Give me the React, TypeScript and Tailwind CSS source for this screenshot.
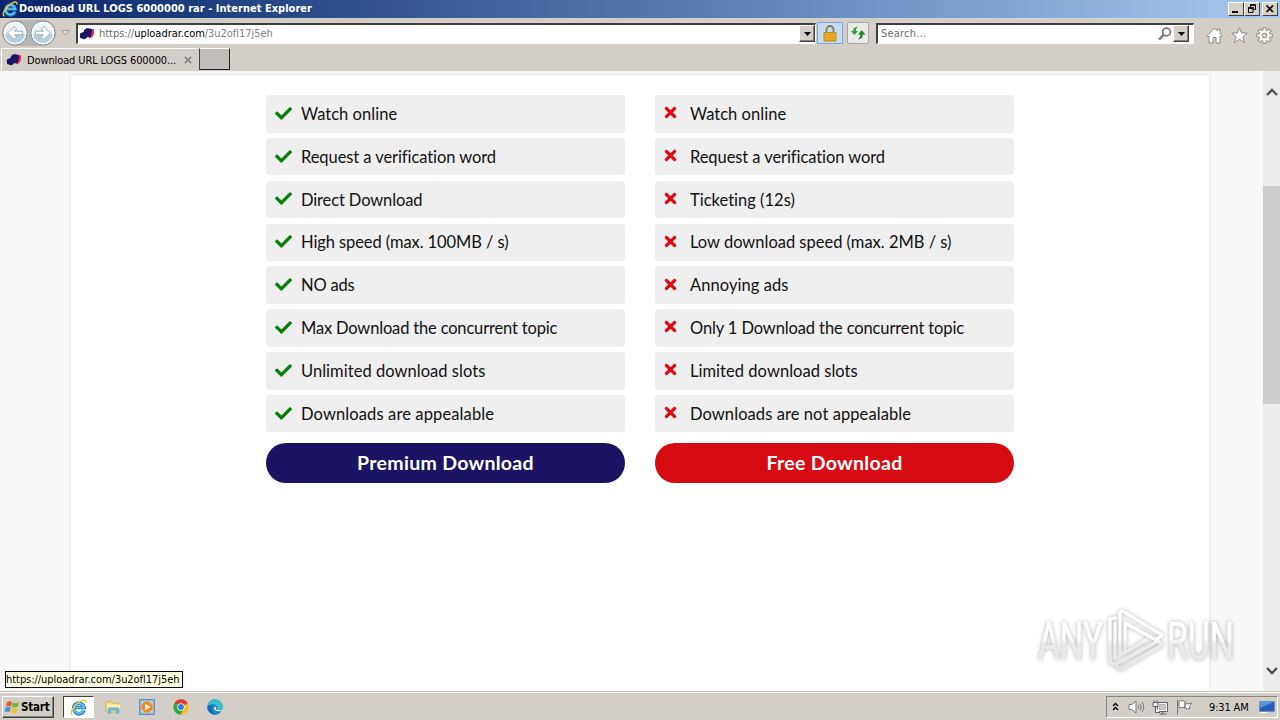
import React from 'react';
import { FaCheck, FaTimes } from 'react-icons/fa';

interface Feature {
  label: string;
  className: string;
}

const premiumFeatures: Feature[] = [
  { label: 'Watch online', className: 'tracking-[0.03px]' },
  { label: 'Request a verification word', className: 'tracking-[-0.08px]' },
  { label: 'Direct Download', className: 'tracking-[-0.13px]' },
  { label: 'High speed (max. 100MB / s)', className: 'tracking-[-0.09px]' },
  { label: 'NO ads', className: 'tracking-[-0.2px]' },
  { label: 'Max Download the concurrent topic', className: 'tracking-[-0.17px]' },
  { label: 'Unlimited download slots', className: 'tracking-[0.04px]' },
  { label: 'Downloads are appealable', className: 'tracking-[0.12px]' },
];

const freeFeatures: Feature[] = [
  { label: 'Watch online', className: 'tracking-[0.03px]' },
  { label: 'Request a verification word', className: 'tracking-[-0.08px]' },
  { label: 'Ticketing (12s)', className: 'tracking-[0.01px]' },
  { label: 'Low download speed (max. 2MB / s)', className: 'tracking-[-0.01px]' },
  { label: 'Annoying ads', className: 'tracking-[0.06px]' },
  { label: 'Only 1 Download the concurrent topic', className: 'tracking-[-0.12px]' },
  { label: 'Limited download slots', className: 'tracking-[0.04px]' },
  { label: 'Downloads are not appealable', className: 'tracking-[0.08px]' },
];

function IeLogo({ className }: { className?: string }) {
  return (
    <svg viewBox="0 0 16 16" className={className}>
      <path d="M13.2 10.6A5 5 0 1 1 13.4 8H4.8" fill="none" stroke="#1f7fd0" strokeWidth="3.4" />
      <path d="M12.9 10.6A4.8 4.8 0 1 1 13.2 8H5" fill="none" stroke="#6cc7f4" strokeWidth="1.6" />
      <path d="M2.6 15C-1.5 14.500 4 5 10.500 1.800C13.500.400 15.600.700 14.800 3.600" fill="none" stroke="#f3c62c" strokeWidth="1.4" />
    </svg>
  );
}

function SiteIcon() {
  return (
    <svg viewBox="0 0 16 14" className="h-[14px] w-4 shrink-0">
      <path d="M11 2.500C13 1 15.500 1.500 15 4C15.500 8 13 12 10 11Z" fill="#e8254e" />
      <path d="M1 9C0 6 3 5.500 4.500 5C5 1.500 8 .500 10 1.500C13 1 13.500 4 12.500 6C13 9 11 11 8.500 10C6 13 3.500 12.500 3.500 11.500C1.500 12 .5 10.500 1 9Z" fill="#1c1466" />
    </svg>
  );
}

/** Round back / forward button */
function NavButton({ forward = false }: { forward?: boolean }) {
  return (
    <svg viewBox="0 0 26 26" className={forward ? 'size-[26px] -scale-x-100' : 'size-[26px]'}>
      <circle cx="13" cy="13" r="12" fill="#eef3f7" stroke="#7f8d98" />
      <path d="M2.500 14A10.500 10.500 0 0 0 23.500 14Z" fill="#b5cfe0" />
      <circle cx="13" cy="13" r="10.700" fill="none" stroke="#fff" strokeWidth="1.2" />
      <path d="M5.500 13L12.200 6.500L14.700 9L12.700 11.200H20.500V14.800H12.700L14.700 17L12.200 19.500Z" fill="#fff" stroke="#8fa5b4" strokeWidth=".9" />
    </svg>
  );
}

function DropButton() {
  return (
    <div className="flex h-[17px] w-4 items-center justify-center border border-t-white border-l-white border-r-[#404040] border-b-[#404040] bg-[#d4d0c8] shadow-[inset_-1px_-1px_0_#808080]">
      <svg viewBox="0 0 7 4" className="h-1 w-[7px]">
        <path d="M0 0H7L3.500 4Z" fill="#000" />
      </svg>
    </div>
  );
}

function TitleBar() {
  return (
    <div className="flex h-[18px] items-center bg-linear-to-r from-[#0a246a] to-[#a6caf0] pl-[2px] pr-[2px]">
      <IeLogo className="size-4" />
      <span className="ml-px flex-1 whitespace-nowrap pt-px font-['DejaVu_Sans_Condensed','DejaVu_Sans',sans-serif] text-[11px] font-bold tracking-[0.02px] text-white">
        Download URL LOGS 6000000 rar - Internet Explorer
      </span>
      <div className="flex">
        {['min', 'restore', 'close'].map((kind) => (
          <div
            key={kind}
            className={
              'flex h-[14px] w-4 items-center justify-center border border-t-white border-l-white border-r-[#404040] border-b-[#404040] bg-[#d4d0c8] ' +
              (kind === 'close' ? 'ml-[2px]' : '')
            }
          >
            <svg viewBox="0 0 12 12" className="size-3" fill="none" stroke="#000">
              {kind === 'min' && <path d="M2 9H8" strokeWidth="2" />}
              {kind === 'restore' && (
                <>
                  <path d="M4 2H9.500M4.500 2V4M9.500 2V6.500H7.500M2 5H7.500M2.500 5V9.500H7V5" />
                  <path d="M4 2H10M2 5H8" strokeWidth="1.6" />
                </>
              )}
              {kind === 'close' && <path d="M2.500 2.500L9 9M9 2.500L2.500 9" strokeWidth="1.7" />}
            </svg>
          </div>
        ))}
      </div>
    </div>
  );
}

function AddressBar() {
  return (
    <div className="flex h-[30px] items-center bg-[#d4cec8]">
      <div className="ml-[2px] flex w-[74px] items-center">
        <div className="flex gap-[2px] rounded-full bg-[#b7b5b3]">
          <NavButton />
          <NavButton forward />
        </div>
        <svg viewBox="0 0 9 6" className="ml-[5px] h-[6px] w-[9px]">
          <path d="M.8.500H8.200L4.500 5Z" fill="#e4e0dc" stroke="#a5a09b" />
        </svg>
      </div>
      <div className="flex h-[21px] w-[740px] items-center border-t-2 border-l-2 border-r border-b border-t-[#404040] border-l-[#404040] border-r-white border-b-white bg-white pl-px">
        <SiteIcon />
        <span className="ml-[4px] flex-1 whitespace-nowrap pt-[2px] text-[11px] tracking-[-0.04px] text-black">
          <span className="text-[#6d6d6d]">https://</span>uploadrar.com<span className="text-[#808080]">/3u2ofl17j5eh</span>
        </span>
        <DropButton />
      </div>
      <div className="ml-px flex h-[22px] w-[26px] items-center justify-center border border-[#7da6d8] bg-[#c5dcf5]">
        <svg viewBox="0 0 14 17" className="h-[17px] w-[14px]">
          <path d="M3.500 8V4.500A3.500 3.500 0 0 1 10.500 4.500V8" fill="none" stroke="#8a7740" strokeWidth="1.8" />
          <path d="M1 7.500H13V16H1Z" fill="#f0b429" stroke="#b98a1c" />
          <path d="M1.500 10H12.500M1.500 12.500H12.500M1.500 15H12.500" stroke="#cc8b14" strokeWidth=".8" />
        </svg>
      </div>
      <div className="ml-1 flex h-[22px] w-[22px] items-center justify-center rounded-xs border border-[#aaa7a3] bg-[#e9e9e8]">
        <svg viewBox="0 0 16 14" className="h-[14px] w-4 shrink-0">
          <path d="M8 .8C5 .8 3.200 2 3.200 5H.8L4.500 9L8 5H5.800C5.800 3 6.500 1.800 8 .8Z" fill="#2f9d3a" />
          <path d="M8 13.200C11 13.200 12.800 12 12.800 8.500H15.500L11.600 4.200L8 8.500H10.200C10.200 11 9.500 12.200 8 13.200Z" fill="#1d8429" />
        </svg>
      </div>
      <div className="ml-[7px] flex h-[21px] w-[318px] items-center border-t-2 border-l-2 border-r border-b border-t-[#404040] border-l-[#404040] border-r-white border-b-white bg-white pr-1">
        <span className="ml-[3px] flex-1 pt-[2px] text-[11px] tracking-[0.2px] text-[#6d6d6d]">Search...</span>
        <svg viewBox="0 0 14 14" className="mr-px size-[14px]" fill="none" stroke="#777">
          <circle cx="8.500" cy="5" r="3.900" strokeWidth="1.7" />
          <path d="M5.700 7.800L1 12.500" strokeWidth="2.4" />
        </svg>
        <DropButton />
      </div>
      <div className="ml-[12px] flex items-center gap-[8px] pt-[4px]">
        <svg viewBox="0 0 17 17" className="size-[17px]">
          <path d="M8.500 1L11.500 4V2H14V6.500L16 8.700L15 10L14 9.200V16H10V10.500H7V16H3V9.200L2 10L1 8.700Z" fill="#fff" stroke="#8e8a86" />
        </svg>
        <svg viewBox="0 0 17 17" className="size-[17px]">
          <path d="M8.500.8L10.700 6H16.200L11.900 9.700L13.600 15.700L8.500 12.300L3.400 15.700L5.100 9.700L.8 6H6.300Z" fill="#fff" stroke="#8e8a86" />
        </svg>
        {/* settings cog: eight teeth, drawn as crossing bars */}
        <svg viewBox="0 0 17 17" className="size-[17px]" fill="none">
          <path d="M8.500.3V16.700M.3 8.500H16.700M2.700 2.700L14.300 14.300M14.300 2.700L2.700 14.300" stroke="#8e8a86" strokeWidth="4" />
          <circle cx="8.500" cy="8.500" r="6" fill="#8e8a86" />
          <path d="M8.500 1.200V15.800M1.200 8.500H15.800M3.400 3.400L13.600 13.600M13.600 3.400L3.400 13.600" stroke="#fff" strokeWidth="2.200" />
          <circle cx="8.500" cy="8.500" r="5.200" fill="#fff" />
          <circle cx="8.500" cy="8.500" r="2.400" fill="#d4cec8" stroke="#8e8a86" />
        </svg>
      </div>
    </div>
  );
}

function TabBar() {
  return (
    <div className="flex h-[23px] bg-[#d4cec8]">
      <div className="ml-px flex h-[23px] w-[197px] items-center border-t border-l border-white pl-[4px]">
        <SiteIcon />
        <span className="ml-[5px] whitespace-nowrap pt-[2px] text-[11px] tracking-[-0.12px] text-black">Download URL LOGS 600000...</span>
        <svg viewBox="0 0 8 8" className="ml-auto mr-[6px] size-2">
          <path d="M.8.8L7.200 7.200M7.200.8L.8 7.200" stroke="#8a8682" strokeWidth="1.8" />
        </svg>
      </div>
      <div className="ml-px h-[22px] w-[31px] border border-t-white border-l-[#404040] border-r-[#202020] border-b-[#202020] bg-[#c1bdb9]" />
    </div>
  );
}

interface PlanColumnProps {
  features: Feature[];
  premium?: boolean;
}

/** One plan: its feature rows and the download button below them */
function PlanColumn({ features, premium = false }: PlanColumnProps) {
  return (
    <div className="w-[359px]">
      <ul className="flex flex-col gap-[5.350px]">
        {features.map((feature) => (
          <li key={feature.label} className="flex h-[37.500px] items-center rounded-[3px] bg-[#efefef] text-[16.500px] text-[#111]">
            {premium ? (
              <FaCheck className="mr-[9px] mb-px ml-[9px] size-[17px] text-[#078007]" />
            ) : (
              <FaTimes className="mr-[11px] mb-[2px] ml-[7px] size-[17px] text-[#e5060c]" />
            )}
            <span className={'whitespace-nowrap pt-px ' + feature.className}>{feature.label}</span>
          </li>
        ))}
      </ul>
      <button
        className={
          'mt-[10.500px] h-10 w-full rounded-full text-[19.500px] font-bold tracking-[0.300px] text-white ' +
          (premium ? 'bg-[#1b1464]' : 'bg-[#d60c12]')
        }
      >
        {premium ? 'Premium Download' : 'Free Download'}
      </button>
    </div>
  );
}

function Watermark() {
  return (
    <svg viewBox="0 0 246 68" className="absolute top-[606px] left-[1034px] h-[68px] w-[246px] drop-shadow-[0_0_2px_rgba(0,0,0,0.3)]">
      <defs>
        <linearGradient id="fade" gradientUnits="userSpaceOnUse" x1="0" y1="0" x2="0" y2="68">
          <stop offset="48%" stopColor="#fff" />
          <stop offset="56%" stopColor="#ececec" />
          <stop offset="100%" stopColor="#e6e6e6" />
        </linearGradient>
      </defs>
      <g fill="url(#fade)" stroke="url(#fade)" strokeWidth=".7" fontFamily="Roboto, sans-serif" fontSize="51">
        <text x="4" y="53" textLength="65" lengthAdjust="spacingAndGlyphs">ANY</text>
        <text x="133" y="53" textLength="67" lengthAdjust="spacingAndGlyphs">RUN</text>
      </g>
      <g fill="none" stroke="url(#fade)" strokeWidth="3.200" strokeLinejoin="round" strokeLinecap="round">
        <path d="M86 48V7Q87 4 90 6L128 29L122 34L91 17V46Z" />
        <path d="M82 58L124 35L128 39L87 63Q83 63 82 58ZM92 46L112 34" />
        <path d="M82 12L76 13V55Q77 59 81 58M81 17V52" />
      </g>
    </svg>
  );
}

function PageContent() {
  return (
    <div className="flex h-[620px] overflow-hidden bg-[#f8f8f8]">
      <div className="flex flex-1 px-[71px] pt-1 pr-[54px]">
        <div className="flex flex-1 items-start justify-center gap-[30px] bg-white pt-5 font-['Lato',sans-serif] shadow-[0_0_3px_rgba(0,0,0,0.16)]">
          <PlanColumn features={premiumFeatures} premium />
          <PlanColumn features={freeFeatures} />
        </div>
      </div>
      <div className="flex w-[17px] flex-col items-center bg-[#ececec]">
        <svg viewBox="0 0 12 8" className="mt-[17px] h-2 w-3">
          <path d="M1 7L6 2L11 7" fill="none" stroke="#4f4f4f" strokeWidth="2.400" />
        </svg>
        <div className="mt-[90px] h-[218px] w-full bg-[#cdcdcd]" />
        <svg viewBox="0 0 12 8" className="mt-auto mb-[16px] h-2 w-3">
          <path d="M1 1L6 6L11 1" fill="none" stroke="#4f4f4f" strokeWidth="2.400" />
        </svg>
      </div>
    </div>
  );
}

function Taskbar() {
  return (
    <div className="flex h-[29px] items-center border-t border-[#c7c3be] bg-[#d4cec8] pt-[2px] shadow-[inset_0_1px_0_#fff]">
      <div className="ml-[2px] flex h-[22px] w-[52px] items-center border border-t-white border-l-white border-r-[#404040] border-b-[#404040] pl-px shadow-[inset_-1px_-1px_0_#808080]">
        <svg viewBox="0 0 16 15" className="h-[15px] w-4">
          <path d="M3 2Q5.500.500 8 2L7 6.500Q4.500 5.500 2 6.500Z" fill="#e85a2a" />
          <path d="M9 2.500Q12 4 15 2L13.800 6.800Q11 8.300 8 7Z" fill="#79b52e" />
          <path d="M1.800 7.500Q4.200 6.500 6.700 7.500L5.500 12Q3 11 .5 12.200Z" fill="#3d8fd8" />
          <path d="M7.700 8Q10.500 9.300 13.500 8L12.200 12.700Q9.500 14 6.500 12.500Z" fill="#f3c02e" />
        </svg>
        <span className="ml-px pt-[2px] font-['DejaVu_Sans_Condensed','DejaVu_Sans',sans-serif] text-[11.500px] font-bold tracking-[-0.200px] text-black">Start</span>
      </div>
      <div className="ml-[9px] flex h-[22px] w-[31px] items-center justify-center border border-t-[#404040] border-l-[#404040] border-r-white border-b-white bg-white">
        <IeLogo className="size-[17px]" />
      </div>
      <svg viewBox="0 0 16 16" className="ml-[11px] size-4">
        <path d="M1 2.500H6L7.500 4H14V13H1Z" fill="#f0d984" stroke="#c9a84e" strokeWidth=".8" />
        <path d="M2 5.500H15V10H2Z" fill="#f9ecb0" />
        <path d="M3 15V9.500Q3 8.500 4 8.500H13Q14 8.500 14 9.500V15H11V11.500H6V15Z" fill="#6fb6de" />
      </svg>
      <svg viewBox="0 0 16 16" className="ml-[18px] size-4">
        <path d="M.5.500H15.500V15.500H.5Z" fill="#8fb9de" stroke="#5c8fc0" />
        <path d="M2.500 2.500H13.500V13.500H2.500Z" fill="#cadef0" />
        <circle cx="8" cy="8" r="5.800" fill="#f28a1c" />
        <path d="M6.200 4.700L11.500 8L6.200 11.300Z" fill="#fff" />
      </svg>
      <svg viewBox="0 0 16 16" className="ml-[18px] size-4">
        <circle cx="8" cy="8" r="7.700" fill="#fbc116" />
        <path d="M8 8L1.330 4.150A7.700 7.700 0 0 1 14.670 4.150Z" fill="#e33b2e" />
        <path d="M8 8L1.330 4.150A7.700 7.700 0 0 0 7.500 15.700L11 9.500Z" fill="#2da94f" />
        <circle cx="8" cy="8" r="3.700" fill="#fff" />
        <circle cx="8" cy="8" r="2.900" fill="#2f7de1" />
      </svg>
      <svg viewBox="0 0 16 16" className="ml-[18px] size-4">
        <circle cx="8" cy="8" r="7.700" fill="#1587d2" />
        <path d="M.4 7A7.700 7.700 0 0 1 15.700 8C15.700 11 11.500 11.500 9.800 10.200C11.500 7.500 9 5.200 6 5.200C3 5.200 1 6 .4 7Z" fill="#39c0c6" />
        <path d="M6 6.500C3.500 9.500 5 14.500 9.500 15.500C5 16.200.5 13 .3 8.500C1 6.500 4 5.700 6 6.500Z" fill="#126cb8" />
        <path d="M8 7.200C5.500 9.500 8 13.300 14.300 12L15.800 10.200C12.500 11.500 9.500 11.300 9 9.900Q9.600 8.200 8 7.200Z" fill="#e4eef2" />
      </svg>
      <div className="ml-auto mr-[2px] flex h-[22px] w-[172px] items-center border border-t-[#8a8682] border-l-[#8a8682] border-r-white border-b-white">
        <svg viewBox="0 0 7 9" className="mb-[2px] ml-[5px] h-[9px] w-[7px]" fill="none" stroke="#000" strokeWidth="1.400">
          <path d="M1 4L3.500 1.500L6 4M1 8L3.500 5.500L6 8" />
        </svg>
        <svg viewBox="0 0 17 14" className="ml-[9px] h-[14px] w-[17px]" fill="none" stroke="#777">
          <path d="M1 4.500H4L8 1V13L4 9.500H1Z" fill="#fff" />
          <path d="M10 5Q11.500 7 10 9M12 3.500Q14.300 7 12 10.500M14 2Q17.500 7 14 12" />
        </svg>
        <svg viewBox="0 0 17 16" className="ml-[7px] h-4 w-[17px]" fill="#f4f4f4" stroke="#62605e">
          <path d="M5.500 3.500H15.500V12.500H5.500ZM7.500 15H14.500M10.500 13V15" />
          <path d="M7.500 5.500H13.500V10.500H7.500Z" fill="#c8c8c8" stroke="#b3b3b3" />
          <path d="M1 3.500H6V7.500H1ZM2 1V3M5 1V3M3.500 8V13.500H8" />
        </svg>
        <svg viewBox="0 0 17 16" className="ml-[7px] h-4 w-[17px]" fill="#fff" stroke="#777">
          <path d="M1.500 1V15.500M3 2Q6 1 9 2.500V9Q6 7.500 3 9ZM9 4.500Q12 5.500 15.500 4L13.500 7.500L14 9.500Q11 10.500 9 9Z" />
        </svg>
        <span className="ml-[16px] whitespace-nowrap pt-[2px] text-[11px] tracking-[-0.150px] text-black">9:31 AM</span>
        <svg viewBox="0 0 16 14" className="ml-auto mr-[2px] h-[14px] w-4">
          <path d="M.5 1.500H15.500V11.500H.5Z" fill="#245eb9" stroke="#7990ad" />
          <path d="M1 2H15L1 8Z" fill="#5693de" />
          <path d="M1 12.500H8" stroke="#fff" />
        </svg>
      </div>
    </div>
  );
}

export default function App() {
  return (
    <div className="relative h-[720px] w-[1280px] overflow-hidden bg-[#d4cec8] font-['DejaVu_Sans_Condensed','DejaVu_Sans',sans-serif]">
      <TitleBar />
      <AddressBar />
      <TabBar />
      <PageContent />
      <Taskbar />
      <Watermark />
      <div className="absolute top-[671px] left-[5px] flex h-[17px] w-[178px] items-center border border-black bg-[#ffffe1] pt-px text-[11px] tracking-[-0.050px] whitespace-nowrap text-black">
        https://uploadrar.com/3u2ofl17j5eh
      </div>
    </div>
  );
}
